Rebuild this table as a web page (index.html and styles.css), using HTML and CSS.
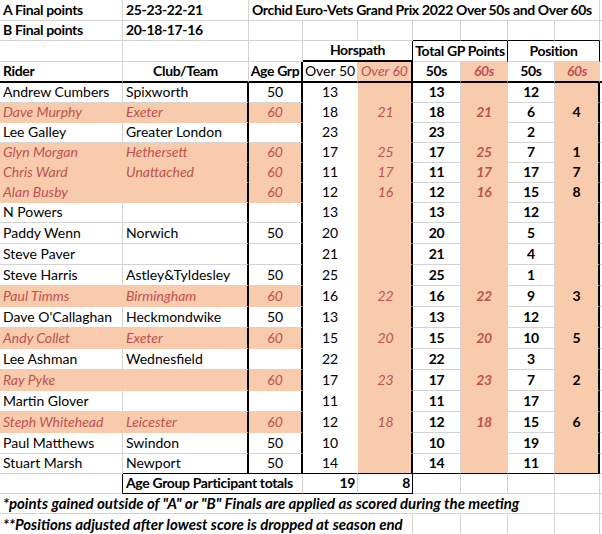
FILE: index.html
```html
<!DOCTYPE html>
<html>
<head>
<meta charset="utf-8">
<link rel="stylesheet" href="styles.css">
</head>
<body>
<div class="sheet">
  <div class="row">
    <div class="c b">A Final points</div>
    <div class="c b">25-23-22-21</div>
    <div class="c b title">Orchid Euro-Vets Grand Prix 2022 Over 50s and Over 60s</div>
    <div class="c end"></div>
  </div>
  <div class="row r2">
    <div class="c b">B Final points</div>
    <div class="c b">20-18-17-16</div>
    <div class="c"></div><div class="c"></div><div class="c"></div>
    <div class="c"></div><div class="c"></div><div class="c"></div><div class="c"></div>
    <div class="c end"></div>
  </div>
  <div class="row r3">
    <div class="c"></div><div class="c"></div><div class="c"></div>
    <div class="c b">Horspath</div>
    <div class="c b">Total GP Points</div>
    <div class="c b">Position</div>
    <div class="c end"></div>
  </div>
  <div class="row hdr">
    <div class="c b">Rider</div>
    <div class="c b">Club/Team</div>
    <div class="c b">Age Grp</div>
    <div class="c">Over 50</div>
    <div class="c">Over 60</div>
    <div class="c">50s</div>
    <div class="c">60s</div>
    <div class="c">50s</div>
    <div class="c">60s</div>
    <div class="c end"></div>
  </div>

  <div class="row d"><div class="c">Andrew Cumbers</div><div class="c">Spixworth</div><div class="c">50</div><div class="c">13</div><div class="c ov"></div><div class="c">13</div><div class="c"></div><div class="c">12</div><div class="c"></div><div class="c end"></div></div>
  <div class="row d o"><div class="c">Dave Murphy</div><div class="c">Exeter</div><div class="c">60</div><div class="c">18</div><div class="c ov">21</div><div class="c">18</div><div class="c">21</div><div class="c">6</div><div class="c">4</div><div class="c end"></div></div>
  <div class="row d"><div class="c">Lee Galley</div><div class="c">Greater London</div><div class="c"></div><div class="c">23</div><div class="c ov"></div><div class="c">23</div><div class="c"></div><div class="c">2</div><div class="c"></div><div class="c end"></div></div>
  <div class="row d o"><div class="c">Glyn Morgan</div><div class="c">Hethersett</div><div class="c">60</div><div class="c">17</div><div class="c ov">25</div><div class="c">17</div><div class="c">25</div><div class="c">7</div><div class="c">1</div><div class="c end"></div></div>
  <div class="row d o"><div class="c">Chris Ward</div><div class="c">Unattached</div><div class="c">60</div><div class="c">11</div><div class="c ov">17</div><div class="c">11</div><div class="c">17</div><div class="c">17</div><div class="c">7</div><div class="c end"></div></div>
  <div class="row d o"><div class="c">Alan Busby</div><div class="c"></div><div class="c">60</div><div class="c">12</div><div class="c ov">16</div><div class="c">12</div><div class="c">16</div><div class="c">15</div><div class="c">8</div><div class="c end"></div></div>
  <div class="row d"><div class="c">N Powers</div><div class="c"></div><div class="c"></div><div class="c">13</div><div class="c ov"></div><div class="c">13</div><div class="c"></div><div class="c">12</div><div class="c"></div><div class="c end"></div></div>
  <div class="row d"><div class="c">Paddy Wenn</div><div class="c">Norwich</div><div class="c">50</div><div class="c">20</div><div class="c ov"></div><div class="c">20</div><div class="c"></div><div class="c">5</div><div class="c"></div><div class="c end"></div></div>
  <div class="row d"><div class="c">Steve Paver</div><div class="c"></div><div class="c"></div><div class="c">21</div><div class="c ov"></div><div class="c">21</div><div class="c"></div><div class="c">4</div><div class="c"></div><div class="c end"></div></div>
  <div class="row d"><div class="c">Steve Harris</div><div class="c">Astley&amp;Tyldesley</div><div class="c">50</div><div class="c">25</div><div class="c ov"></div><div class="c">25</div><div class="c"></div><div class="c">1</div><div class="c"></div><div class="c end"></div></div>
  <div class="row d o"><div class="c">Paul Timms</div><div class="c">Birmingham</div><div class="c">60</div><div class="c">16</div><div class="c ov">22</div><div class="c">16</div><div class="c">22</div><div class="c">9</div><div class="c">3</div><div class="c end"></div></div>
  <div class="row d"><div class="c">Dave O'Callaghan</div><div class="c">Heckmondwike</div><div class="c">50</div><div class="c">13</div><div class="c ov"></div><div class="c">13</div><div class="c"></div><div class="c">12</div><div class="c"></div><div class="c end"></div></div>
  <div class="row d o"><div class="c">Andy Collet</div><div class="c">Exeter</div><div class="c">60</div><div class="c">15</div><div class="c ov">20</div><div class="c">15</div><div class="c">20</div><div class="c">10</div><div class="c">5</div><div class="c end"></div></div>
  <div class="row d"><div class="c">Lee Ashman</div><div class="c">Wednesfield</div><div class="c"></div><div class="c">22</div><div class="c ov"></div><div class="c">22</div><div class="c"></div><div class="c">3</div><div class="c"></div><div class="c end"></div></div>
  <div class="row d o"><div class="c">Ray Pyke</div><div class="c"></div><div class="c">60</div><div class="c">17</div><div class="c ov">23</div><div class="c">17</div><div class="c">23</div><div class="c">7</div><div class="c">2</div><div class="c end"></div></div>
  <div class="row d"><div class="c">Martin Glover</div><div class="c"></div><div class="c"></div><div class="c">11</div><div class="c ov"></div><div class="c">11</div><div class="c"></div><div class="c">17</div><div class="c"></div><div class="c end"></div></div>
  <div class="row d o"><div class="c">Steph Whitehead</div><div class="c">Leicester</div><div class="c">60</div><div class="c">12</div><div class="c ov">18</div><div class="c">12</div><div class="c">18</div><div class="c">15</div><div class="c">6</div><div class="c end"></div></div>
  <div class="row d"><div class="c">Paul Matthews</div><div class="c">Swindon</div><div class="c">50</div><div class="c">10</div><div class="c ov"></div><div class="c">10</div><div class="c"></div><div class="c">19</div><div class="c"></div><div class="c end"></div></div>
  <div class="row d last"><div class="c">Stuart Marsh</div><div class="c">Newport</div><div class="c">50</div><div class="c">14</div><div class="c ov"></div><div class="c">14</div><div class="c"></div><div class="c">11</div><div class="c"></div><div class="c end"></div></div>

  <div class="row tot">
    <div class="c"></div>
    <div class="c">Age Group Participant totals</div>
    <div class="c">19</div>
    <div class="c">8</div>
    <div class="c"></div><div class="c"></div><div class="c"></div><div class="c"></div>
    <div class="c end"></div>
  </div>
  <div class="row fn1">
    <div class="c fn">*points gained outside of "A" or "B" Finals are applied as scored during the meeting</div>
    <div class="c"></div>
    <div class="c end"></div>
  </div>
  <div class="row fn2">
    <div class="c fn">**Positions adjusted after lowest score is dropped at season end</div>
    <div class="c"></div><div class="c"></div><div class="c"></div><div class="c"></div>
    <div class="c end"></div>
  </div>
</div>
</body>
</html>
```

FILE: styles.css
```css
html, body {
  margin: 0;
  background: #fff;
}

.sheet {
  display: grid;
  grid-template-columns: 123px 126px 54px 55px 55px 48px 47px 47px 45px 1fr;
  grid-template-rows: 21px 20px 21px 21px repeat(7, 20px) repeat(11, 21px) 20px 20px 20px 21px;
  font-family: Lato, "Noto Sans", sans-serif;
  font-size: 14px;
  line-height: 18px;
  color: #000;
}

.row { display: contents; }

.c {
  box-sizing: border-box;
  min-width: 0;
  display: flex;
  align-items: flex-end;
  padding: 0 3px 1px;
  white-space: nowrap;
  overflow: hidden;
  border-right: 1px solid #d4d4d4;
  border-bottom: 1px solid #d4d4d4;
}

.end { border-right: none; }

.b,
.hdr > :nth-child(n+6),
.d > :nth-child(n+6):nth-child(-n+9),
.tot > :nth-child(n+2):nth-child(-n+4) {
  font-weight: 700;
  letter-spacing: -0.35px;
}

.title { grid-column: span 7; }

/* row 2: top edge of the Total GP / Position boxes */
.r2 > :nth-child(n+6):nth-child(-n+9) { border-bottom-color: #000; }

/* row 3: group headings */
.r3 > :nth-child(n+4):nth-child(-n+6) {
  grid-column: span 2;
  justify-content: center;
  border-right-color: #000;
}
.r3 > :nth-child(4) { border-bottom: 2px solid #000; }

/* row 4: column headings */
.hdr > .c { border-bottom: 2px solid #000; justify-content: center; }
.hdr > :nth-child(1) { justify-content: flex-start; }
.hdr > :nth-child(3) { border-right: 2px solid #000; }
.hdr > :nth-child(5) { border-right: 2px solid #000; }
.hdr > :nth-child(5),
.hdr > :nth-child(7),
.hdr > :nth-child(9) {
  background-color: #f8cbad;
  color: #c0504d;
  font-style: italic;
}
.hdr > :nth-child(7) { border-right-color: transparent; }
.hdr > :nth-child(9) { border-right-color: transparent; }

/* data rows */
.d > :nth-child(2) { border-right: 2px solid #000; }
.d > :nth-child(3) { border-right: 2px solid #000; justify-content: center; }
.d > :nth-child(4) {
  justify-content: center;
  border-right-color: transparent;
  border-bottom-color: transparent;
}

/* Over 60 column with its heavy right rule */
.d > .ov {
  justify-content: center;
  padding-right: 1px;
  background-color: #f8cbad;
  border-bottom-color: #f8cbad;
  border-right: 2px solid #000;
  font-style: italic;
  color: #c0504d;
}

.d > :nth-child(6) { justify-content: center; }
.d > :nth-child(7) {
  justify-content: center;
  background-color: #f8cbad;
  border-color: transparent;
  font-style: italic;
  color: #c0504d;
}
.d > :nth-child(8) { justify-content: center; }
.d > :nth-child(9) {
  justify-content: center;
  background-color: #f8cbad;
  border-bottom-color: transparent;
  border-right: 2px solid #000;
}

/* over-60 riders */
.o > :nth-child(-n+3) {
  background-color: #f8cbad;
  color: #c0504d;
  font-style: italic;
  border-bottom-color: transparent;
}
.o > :nth-child(1) { border-right-color: transparent; }

.last > :nth-child(n+2):nth-child(-n+9) { border-bottom: 1px solid #000; }

/* totals */
.tot > :nth-child(1) { border-right-color: #000; }
.tot > :nth-child(2) {
  grid-column: span 2;
  border-bottom-color: #000;
}
.tot > :nth-child(3),
.tot > :nth-child(4) {
  justify-content: flex-end;
  border-bottom-color: #000;
  padding-right: 2px;
}
.tot > :nth-child(4) { border-right-color: #000; }

/* footnotes */
.fn { font-weight: 700; font-style: italic; font-size: 15px; }
.fn1 > .fn { grid-column: span 8; }
.fn2 > .fn { grid-column: span 5; }
```
